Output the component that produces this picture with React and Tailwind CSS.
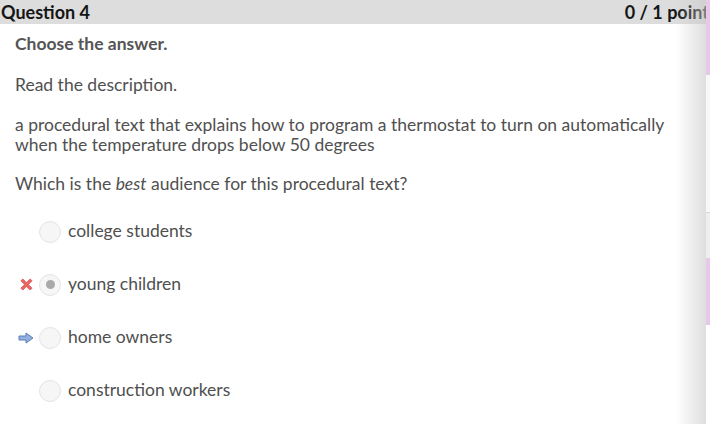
import React from 'react';

const options = [
    { label: 'college students' },
    { label: 'young children', selected: true, mark: 'wrong' },
    { label: 'home owners', mark: 'answer' },
    { label: 'construction workers' },
];

const WrongMark = () => (
    <svg width="15" height="15" viewBox="0 0 14 14">
        <path d="M1.8 3.6 L3.6 1.8 L7 5.2 L10.4 1.8 L12.2 3.6 L8.8 7 L12.2 10.4 L10.4 12.2 L7 8.8 L3.6 12.2 L1.8 10.4 L5.2 7 Z" fill="#f06464" stroke="#cc4040" strokeWidth="0.6" />
    </svg>
);

const AnswerMark = () => (
    <svg width="16" height="12" viewBox="0 0 16 12">
        <path d="M1 4 H8 V1 L15 6 L8 11 V8 H1 Z" fill="#8fb0e0" stroke="#5d7fb5" strokeWidth="1" strokeLinejoin="round" />
    </svg>
);

const Option = ({ label, selected, mark }) => (
    <div className="flex items-center h-[53px]">
        <div className="w-[39px] flex justify-end pr-[5px]">
            {mark === 'wrong' && <WrongMark />}
            {mark === 'answer' && <AnswerMark />}
        </div>
        <div className="w-[22px] h-[22px] rounded-full border border-[#e4e4e4] bg-[#f6f6f6] flex items-center justify-center">
            {selected && <div className="w-[9px] h-[9px] rounded-full bg-[#a9a9a9]" />}
        </div>
        <span className="ml-[7px] text-[17.5px] text-[#4f4f4f]">{label}</span>
    </div>
);

export default function App() {
    return (
        <div className="relative w-[710px] h-[424px] overflow-hidden bg-white" style={{ fontFamily: 'Lato, "Open Sans", sans-serif' }}>
            <div className="flex justify-between items-center h-[24px] bg-[#dddddd] pl-[1px] pr-[1px] text-[18px] font-bold text-[#151515] leading-none">
                <span>Question 4</span>
                <span>0 / 1 point</span>
            </div>

            <div className="pl-[15px] pr-[30px] text-[17.5px] leading-[20px] text-[#505050]">
                <p className="mt-[10px] font-bold text-[#555555]">Choose the answer.</p>
                <p className="mt-[21px]">Read the description.</p>
                <p className="mt-[20px]">
                    a procedural text that explains how to program a thermostat to turn on automatically
                    <br />
                    when the temperature drops below 50 degrees
                </p>
                <p className="mt-[19px]">
                    Which is the <em>best</em> audience for this procedural text?
                </p>
            </div>

            <div className="mt-[11px]">
                {options.map((o) => (
                    <Option key={o.label} {...o} />
                ))}
            </div>

            {/* right edge shadow + side strip */}
            <div className="absolute top-0 right-[4px] w-[30px] h-full bg-gradient-to-r from-transparent to-[#c8c8c8] opacity-60" />
            <div className="absolute top-0 right-0 w-[4px] h-full flex flex-col">
                <div className="h-[75px] bg-[#e8c8e8]" />
                <div className="h-[138px] bg-[#f8f8f8] border-b border-[#d8d8d8]" />
                <div className="h-[45px] bg-[#eeeeee]" />
                <div className="h-[67px] bg-[#e8c8e8]" />
                <div className="flex-1 bg-white" />
            </div>
        </div>
    );
}
